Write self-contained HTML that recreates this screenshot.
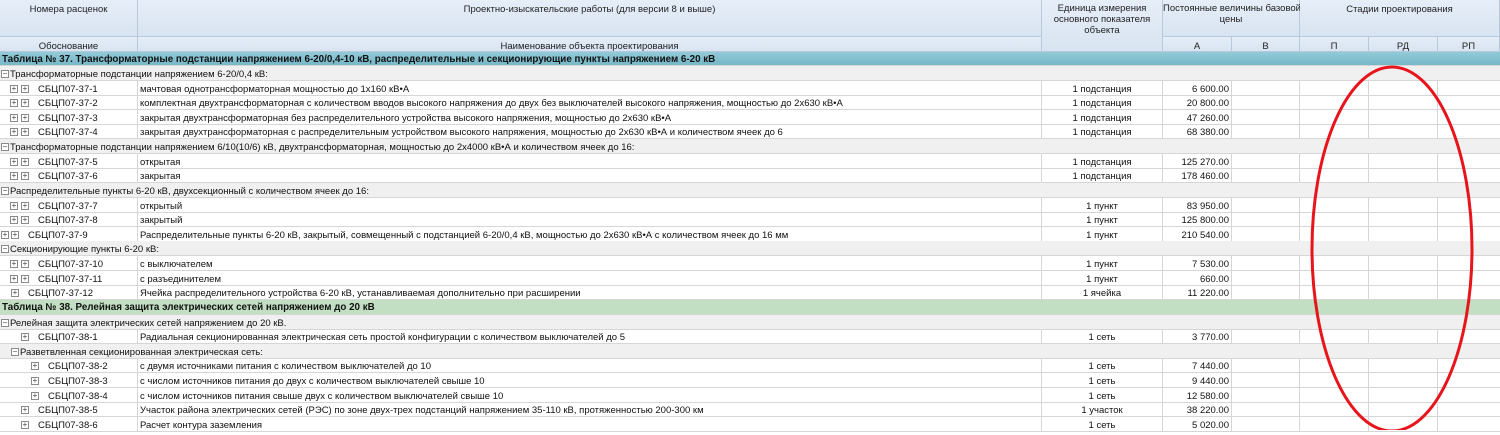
<!DOCTYPE html>
<html><head><meta charset="utf-8">
<style>
*{margin:0;padding:0;box-sizing:border-box}
body{width:1500px;height:430px;overflow:hidden;background:#fff;font-family:"Liberation Sans","DejaVu Sans",sans-serif;font-size:9.5px;color:#111;position:relative}
.h{position:absolute;background:linear-gradient(#e6eef8,#d8e4f1);border-right:1px solid #b9c9dc;border-bottom:1px solid #b9c9dc;text-align:center;color:#222;line-height:11px;white-space:nowrap}
.r{position:absolute;left:0;width:1500px;height:15px;border-bottom:1px solid #d6d6d6;line-height:18px;white-space:nowrap}
.g{background:#f0f0f0}
.t1{background:linear-gradient(#92cad8,#76b7c8);font-weight:bold;font-size:9.8px;padding-left:2px;line-height:15px}
.t2{background:#c2dfc3;font-weight:bold;padding-left:2px;font-size:9.8px;line-height:16px}
.c{position:absolute;top:0;height:14px;border-right:1px solid #d6d6d6}
.ic{position:absolute;top:4px;width:8px;height:8px;border:1px solid #8a8a8a;background:#fff;font-size:8px;line-height:6px;text-align:center;color:#444}
</style></head><body>

<div class="h" style="left:0;top:0;width:138px;height:37px;padding-top:4px">Номера расценок</div>
<div class="h" style="left:138px;top:0;width:904px;height:37px;padding-top:4px">Проектно-изыскательские работы (для версии 8 и выше)</div>
<div class="h" style="left:0;top:37px;width:138px;height:15px;padding-top:4px">Обоснование</div>
<div class="h" style="left:138px;top:37px;width:904px;height:15px;padding-top:4px">Наименование объекта проектирования</div>
<div class="h" style="left:1042px;top:0;width:121px;height:52px;padding-top:3px">Единица измерения<br>основного показателя<br>объекта</div>
<div class="h" style="left:1163px;top:0;width:137px;height:37px;padding-top:3px">Постоянные величины базовой<br>цены</div>
<div class="h" style="left:1300px;top:0;width:200px;height:37px;padding-top:4px">Стадии проектирования</div>
<div class="h" style="left:1163px;top:37px;width:69px;height:15px;padding-top:4px">А</div>
<div class="h" style="left:1232px;top:37px;width:68px;height:15px;padding-top:4px">В</div>
<div class="h" style="left:1300px;top:37px;width:69px;height:15px;padding-top:4px">П</div>
<div class="h" style="left:1369px;top:37px;width:69px;height:15px;padding-top:4px">РД</div>
<div class="h" style="left:1438px;top:37px;width:62px;height:15px;padding-top:4px">РП</div>

<div class="r t1" style="top:52px;height:14px">Таблица № 37. Трансформаторные подстанции напряжением 6-20/0,4-10 кВ, распределительные и секционирующие пункты напряжением 6-20 кВ</div>

<div id="rows"></div>

<svg style="position:absolute;left:0;top:0" width="1500" height="430"><ellipse cx="1392" cy="249" rx="80" ry="182" fill="none" stroke="#e8141c" stroke-width="3"/></svg>

<script>
var R=[
['g',0,'Трансформаторные подстанции напряжением 6-20/0,4 кВ:'],
['d',[9,20],38,'СБЦП07-37-1','мачтовая однотрансформаторная мощностью до 1х160 кВ•А','1 подстанция','6 600.00'],
['d',[9,20],38,'СБЦП07-37-2','комплектная двухтрансформаторная с количеством вводов высокого напряжения до двух без выключателей высокого напряжения, мощностью до 2х630 кВ•А','1 подстанция','20 800.00'],
['d',[9,20],38,'СБЦП07-37-3','закрытая двухтрансформаторная без распределительного устройства высокого напряжения, мощностью до 2х630 кВ•А','1 подстанция','47 260.00'],
['d',[9,20],38,'СБЦП07-37-4','закрытая двухтрансформаторная с распределительным устройством высокого напряжения, мощностью до 2х630 кВ•А и количеством ячеек до 6','1 подстанция','68 380.00'],
['g',0,'Трансформаторные подстанции напряжением 6/10(10/6) кВ, двухтрансформаторная, мощностью до 2х4000 кВ•А и количеством ячеек до 16:'],
['d',[9,20],38,'СБЦП07-37-5','открытая','1 подстанция','125 270.00'],
['d',[9,20],38,'СБЦП07-37-6','закрытая','1 подстанция','178 460.00'],
['g',0,'Распределительные пункты 6-20 кВ, двухсекционный с количеством ячеек до 16:'],
['d',[9,20],38,'СБЦП07-37-7','открытый','1 пункт','83 950.00'],
['d',[9,20],38,'СБЦП07-37-8','закрытый','1 пункт','125 800.00'],
['d',[0,10],28,'СБЦП07-37-9','Распределительные пункты 6-20 кВ, закрытый, совмещенный с подстанцией 6-20/0,4 кВ, мощностью до 2х630 кВ•А с количеством ячеек до 16 мм','1 пункт','210 540.00'],
['g',0,'Секционирующие пункты 6-20 кВ:'],
['d',[9,20],38,'СБЦП07-37-10','с выключателем','1 пункт','7 530.00'],
['d',[9,20],38,'СБЦП07-37-11','с разъединителем','1 пункт','660.00'],
['d',[10],28,'СБЦП07-37-12','Ячейка распределительного устройства 6-20 кВ, устанавливаемая дополнительно при расширении','1 ячейка','11 220.00'],
['t','Таблица № 38. Релейная защита электрических сетей напряжением до 20 кВ'],
['g',0,'Релейная защита электрических сетей напряжением до 20 кВ.'],
['d',[20],38,'СБЦП07-38-1','Радиальная секционированная электрическая сеть простой конфигурации с количеством выключателей до 5','1 сеть','3 770.00'],
['g',10,'Разветвленная секционированная электрическая сеть:'],
['d',[30],48,'СБЦП07-38-2','с двумя источниками питания с количеством выключателей до 10','1 сеть','7 440.00'],
['d',[30],48,'СБЦП07-38-3','с числом источников питания до двух с количеством выключателей свыше 10','1 сеть','9 440.00'],
['d',[30],48,'СБЦП07-38-4','с числом источников питания свыше двух с количеством выключателей свыше 10','1 сеть','12 580.00'],
['d',[20],38,'СБЦП07-38-5','Участок района электрических сетей (РЭС) по зоне двух-трех подстанций напряжением 35-110 кВ, протяженностью 200-300 км','1 участок','38 220.00'],
['d',[20],38,'СБЦП07-38-6','Расчет контура заземления','1 сеть','5 020.00']
];
var h='';
R.forEach(function(r,i){
 var top=Math.round(66+i*14.62);
 if(r[0]=='g'){h+='<div class="r g" style="top:'+top+'px"><span class="ic" style="left:'+(r[1]+1)+'px">−</span><span style="position:absolute;left:'+(r[1]+10)+'px">'+r[2]+'</span></div>';}
 else if(r[0]=='t'){h+='<div class="r t2" style="top:'+top+'px">'+r[1]+'</div>';}
 else{
  var s='<div class="r" style="top:'+top+'px">';
  s+='<div class="c" style="left:0;width:138px">';
  r[1].forEach(function(x){s+='<span class="ic" style="left:'+(x+1)+'px">+</span>';});
  s+='<span style="position:absolute;left:'+r[2]+'px">'+r[3]+'</span></div>';
  s+='<div class="c" style="left:138px;width:904px;padding-left:2px;overflow:hidden;height:15px">'+r[4]+'</div>';
  s+='<div class="c" style="left:1042px;width:121px;text-align:center">'+r[5]+'</div>';
  s+='<div class="c" style="left:1163px;width:69px;text-align:right;padding-right:2px">'+r[6]+'</div>';
  s+='<div class="c" style="left:1232px;width:68px"></div><div class="c" style="left:1300px;width:69px"></div><div class="c" style="left:1369px;width:69px"></div>';
  h+=s+'</div>';
 }
});
document.getElementById('rows').innerHTML=h;
</script>
</body></html>
